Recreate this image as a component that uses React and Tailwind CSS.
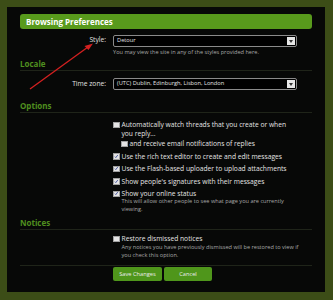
import React from "react";

const font = { fontFamily: '"Open Sans", "DejaVu Sans", sans-serif' };

const Check = ({ checked }) => (
  <span className="mt-[1.5px] w-[6.5px] h-[6.5px] shrink-0 bg-[#e4e4e4] border border-[#a0a0a0] flex items-center justify-center">
    {checked && (
      <svg width="5" height="5" viewBox="0 0 5 5">
        <path d="M1 2.7 L2 3.7 L4.2 0.9" stroke="#2b3d8f" strokeWidth="0.9" fill="none" />
      </svg>
    )}
  </span>
);

const Select = ({ value }) => (
  <div className="w-[184px] h-[12px] bg-black border border-[#8a8a8a] rounded-[2px] flex items-center justify-between pl-[3px] pr-[1px]">
    <span className="text-[5.7px] text-[#e0e0e0] leading-none">{value}</span>
    <span className="w-[8px] h-[8px] bg-[#e6e6e6] flex items-center justify-center">
      <svg width="4" height="3" viewBox="0 0 4 3">
        <path d="M0 0 H4 L2 3 Z" fill="#333" />
      </svg>
    </span>
  </div>
);

const Heading = ({ children, mt }) => (
  <div className={mt}>
    <div className="text-[8px] font-bold text-[#4f8f1f] leading-[10px]">{children}</div>
    <div className="mt-px h-px bg-[#1f2419]" />
  </div>
);

const Option = ({ checked, children, className = "" }) => (
  <div className={`flex gap-[2px] ${className}`}>
    <Check checked={checked} />
    <div className="text-[6.7px] leading-[9px] text-[#e4e4e4] whitespace-nowrap">{children}</div>
  </div>
);

const Hint = ({ children, lh }) => (
  <div className={`ml-[8.5px] text-[5.6px] ${lh} text-[#a8a8a8] whitespace-nowrap`}>{children}</div>
);

export default function App() {
  return (
    <div className="w-[333px] h-[300px] bg-[#3c4d17] pt-[7px] pl-[7px] overflow-hidden relative" style={font}>
      <div className="w-[318px] h-[285px] bg-[#070807] pt-[7px] pl-[13px] pr-[13px]">
        <div className="h-[15px] bg-[#589a1c] rounded-[3px] flex items-center pl-[6px]">
          <span className="text-[8px] font-bold text-white leading-none">Browsing Preferences</span>
        </div>

        <div className="flex mt-[6px]">
          <div className="w-[86px] text-right text-[6.7px] text-[#e0e0e0] leading-[10px]">Style:</div>
          <div className="ml-[7px]">
            <Select value="Detour" />
            <div className="mt-px text-[5.6px] leading-[8px] text-[#a8a8a8] whitespace-nowrap">You may view the site in any of the styles provided here.</div>
          </div>
        </div>

        <Heading mt="mt-[3px]">Locale</Heading>

        <div className="flex mt-[7px]">
          <div className="w-[86px] text-right text-[6.7px] text-[#e0e0e0] leading-[11px]">Time zone:</div>
          <div className="ml-[7px]">
            <Select value="(UTC) Dublin, Edinburgh, Lisbon, London" />
          </div>
        </div>

        <Heading mt="mt-[11px]">Options</Heading>

        <div className="ml-[93px] mt-[7px] flex flex-col">
          <Option>Automatically watch threads that you create or when<br />you reply...</Option>
          <Option className="ml-[8px] mt-px">and receive email notifications of replies</Option>
          <Option checked className="mt-[3.5px]">Use the rich text editor to create and edit messages</Option>
          <Option checked className="mt-[3.5px]">Use the Flash-based uploader to upload attachments</Option>
          <Option checked className="mt-[3.5px]">Show people's signatures with their messages</Option>
          <Option checked className="mt-[3.5px]">Show your online status</Option>
          <Hint lh="leading-[7.5px]">This will allow other people to see what page you are currently<br />viewing.</Hint>
        </div>

        <Heading mt="mt-[5px]">Notices</Heading>

        <div className="ml-[93px] mt-[4px]">
          <Option>Restore dismissed notices</Option>
          <Hint lh="leading-[8px]">Any notices you have previously dismissed will be restored to view if<br />you check this option.</Hint>
        </div>

        <div className="mt-[6px] h-px bg-[#1f2419]" />

        <div className="ml-[93px] mt-px flex gap-[2px]">
          <div className="w-[49px] h-[14px] bg-[#4f961b] rounded-[2px] flex items-center justify-center text-[5.7px] text-[#ececec]">Save Changes</div>
          <div className="w-[48px] h-[14px] bg-[#4f961b] rounded-[2px] flex items-center justify-center text-[5.7px] text-[#ececec]">Cancel</div>
        </div>
      </div>

      <svg className="absolute left-0 top-0 pointer-events-none" width="333" height="300">
        <line x1="30" y1="89" x2="88" y2="47" stroke="#d42020" strokeWidth="1.3" />
        <path d="M93 43.5 L84.5 46 L88.5 50 Z" fill="#d42020" />
      </svg>
    </div>
  );
}
